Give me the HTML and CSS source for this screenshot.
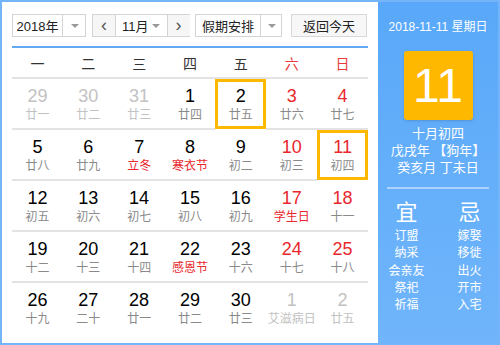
FILE: index.html
```html
<!DOCTYPE html>
<html lang="zh-CN">
<head>
    <meta charset="UTF-8">
    <title>万年历</title>
    <link rel="stylesheet" href="styles.css">
</head>
<body>
    <div class="calendar">
        <div class="cal-main">
            <div class="toolbar">
                <div class="select year-select">
                    <span class="select-text">2018年</span>
                    <span class="select-arrow"></span>
                </div>
                <div class="month-group">
                    <span class="nav-btn">&lsaquo;</span>
                    <div class="month-select">
                        <span class="select-text">11月</span>
                        <span class="select-arrow"></span>
                    </div>
                    <span class="nav-btn">&rsaquo;</span>
                </div>
                <div class="select holiday-select">
                    <span class="select-text">假期安排</span>
                    <span class="select-arrow"></span>
                </div>
                <div class="today-btn">返回今天</div>
            </div>

            <div class="weekdays">
                <span>一</span><span>二</span><span>三</span><span>四</span><span>五</span>
                <span class="weekend">六</span><span class="weekend">日</span>
            </div>

            <div class="days" id="days"></div>
        </div>

        <div class="cal-side">
            <div class="side-date">2018-11-11 星期日</div>
            <div class="side-day">11</div>
            <div class="side-lunar">
                <p>十月初四</p>
                <p>戊戌年 【狗年】</p>
                <p>癸亥月 丁未日</p>
            </div>
            <div class="side-almanac">
                <div class="almanac-col">
                    <h3>宜</h3>
                    <p>订盟</p><p>纳采</p><p>会亲友</p><p>祭祀</p><p>祈福</p>
                </div>
                <div class="almanac-col">
                    <h3>忌</h3>
                    <p>嫁娶</p><p>移徙</p><p>出火</p><p>开市</p><p>入宅</p>
                </div>
            </div>
        </div>
    </div>

    <script>
        // [day, lunar, flags] flags: o = other month, r = red day, f = festival, s = selected
        const days = [
            [29, '廿一', 'o'], [30, '廿二', 'o'], [31, '廿三', 'o'], [1, '廿四', ''], [2, '廿五', 's'], [3, '廿六', 'r'], [4, '廿七', 'r'],
            [5, '廿八', ''], [6, '廿九', ''], [7, '立冬', 'f'], [8, '寒衣节', 'f'], [9, '初二', ''], [10, '初三', 'r'], [11, '初四', 'rs'],
            [12, '初五', ''], [13, '初六', ''], [14, '初七', ''], [15, '初八', ''], [16, '初九', ''], [17, '学生日', 'rf'], [18, '十一', 'r'],
            [19, '十二', ''], [20, '十三', ''], [21, '十四', ''], [22, '感恩节', 'f'], [23, '十六', ''], [24, '十七', 'r'], [25, '十八', 'r'],
            [26, '十九', ''], [27, '二十', ''], [28, '廿一', ''], [29, '廿二', ''], [30, '廿三', ''], [1, '艾滋病日', 'o'], [2, '廿五', 'o']
        ];

        const container = document.getElementById('days');
        days.forEach(([day, lunar, flags]) => {
            const cell = document.createElement('div');
            cell.className = 'day';
            if (flags.includes('o')) cell.classList.add('other');
            if (flags.includes('r')) cell.classList.add('red');
            if (flags.includes('f')) cell.classList.add('festival');
            if (flags.includes('s')) cell.classList.add('selected');
            cell.innerHTML = `<span class="num">${day}</span><span class="lunar">${lunar}</span>`;
            container.appendChild(cell);
        });
    </script>
</body>
</html>
```

FILE: styles.css
```css
* {
    margin: 0;
    padding: 0;
    box-sizing: border-box;
}

body {
    font-family: 'Liberation Sans', 'Noto Sans CJK SC', sans-serif;
    background: #fff;
    color: #000;
}

.calendar {
    width: 500px;
    height: 345px;
    display: flex;
    border: 2px solid #74b4f8;
    background: #fff;
}

.cal-main {
    width: 376px;
    padding: 12px 10px 0 10px;
}

/* toolbar */
.toolbar {
    display: flex;
    align-items: center;
    height: 23px;
}

.select,
.month-group {
    display: flex;
    height: 23px;
    border: 1px solid #d4d4d4;
    background: #fff;
}

.select-text {
    flex: 1;
    display: flex;
    align-items: center;
    justify-content: center;
    font-size: 13px;
    color: #222;
    white-space: nowrap;
}

.select-arrow {
    width: 23px;
    border-left: 1px solid #d4d4d4;
    position: relative;
}

.select-arrow::after {
    content: '';
    position: absolute;
    left: 8px;
    top: 9px;
    border-left: 4px solid transparent;
    border-right: 4px solid transparent;
    border-top: 4px solid #999;
}

.year-select {
    width: 74px;
}

.month-group {
    width: 98px;
    margin-left: 6px;
}

.nav-btn {
    width: 22px;
    flex-shrink: 0;
    background: #f6f6f6;
    display: flex;
    align-items: center;
    justify-content: center;
    font-size: 18px;
    color: #555;
    line-height: 1;
    padding-bottom: 2px;
}

.month-select {
    flex: 1;
    display: flex;
    border-left: 1px solid #d4d4d4;
    border-right: 1px solid #d4d4d4;
}

.month-select .select-text {
    padding-left: 6px;
}

.month-select .select-arrow {
    width: 18px;
    flex-shrink: 0;
    border-left: none;
}

.month-select .select-arrow::after {
    left: 3px;
}

.holiday-select {
    width: 87px;
    margin-left: 5px;
}

.holiday-select .select-arrow {
    width: 21px;
}

.holiday-select .select-arrow::after {
    left: 7px;
}

.today-btn {
    width: 76px;
    height: 23px;
    margin-left: 9px;
    border: 1px solid #d8d8d8;
    background: #f7f7f7;
    font-size: 13px;
    color: #222;
    display: flex;
    align-items: center;
    justify-content: center;
}

/* weekday header */
.weekdays {
    margin-top: 9px;
    border-top: 2px solid #63a8f3;
    border-bottom: 2px solid #e3e3e3;
    display: grid;
    grid-template-columns: repeat(7, 1fr);
    height: 33px;
    align-items: center;
    font-size: 14px;
    color: #333;
    text-align: center;
}

.weekdays .weekend {
    color: #e83a3a;
}

/* days grid */
.days {
    display: grid;
    grid-template-columns: repeat(7, 1fr);
    grid-auto-rows: 51px;
}

.day {
    display: flex;
    flex-direction: column;
    align-items: center;
    padding-top: 7px;
    border-bottom: 2px solid #e3e3e3;
}

.day:nth-last-child(-n+7) {
    border-bottom: none;
}

.day .num {
    font-size: 18px;
    line-height: 20px;
    color: #000;
}

.day .lunar {
    margin-top: 1px;
    font-size: 12px;
    line-height: 16px;
    color: #8a8a8a;
}

.day.other .num,
.day.other .lunar {
    color: #c2c2c2;
}

.day.red .num {
    color: #e8282d;
}

.day.festival .lunar {
    color: #e8282d;
}

.day.selected {
    border: 3px solid #ffb800;
    padding-top: 4px;
    margin-bottom: 1px;
}

/* side panel */
.cal-side {
    width: 120px;
    background: linear-gradient(180deg, #59a8f9 0%, #70b5fb 100%);
    color: #fff;
    display: flex;
    flex-direction: column;
    align-items: center;
    padding-top: 16px;
}

.side-date {
    font-size: 12px;
    line-height: 18px;
}

.side-day {
    width: 69px;
    height: 69px;
    margin-top: 15px;
    background: #ffb800;
    border-radius: 3px;
    box-shadow: 0 1px 3px rgba(0, 0, 0, 0.15);
    font-size: 48px;
    line-height: 69px;
    text-align: center;
}

.side-lunar {
    margin-top: 5px;
    width: 102px;
    padding-bottom: 11px;
    border-bottom: 2px solid rgba(255, 255, 255, 0.45);
    text-align: center;
    font-size: 13px;
    line-height: 17px;
}

.side-almanac {
    display: flex;
    gap: 23px;
    margin-top: 10px;
    text-align: center;
}

.almanac-col {
    width: 40px;
}

.almanac-col h3 {
    font-size: 22px;
    font-weight: normal;
    line-height: 28px;
    margin-bottom: 1px;
}

.almanac-col p {
    font-size: 12px;
    line-height: 17.3px;
}
```
